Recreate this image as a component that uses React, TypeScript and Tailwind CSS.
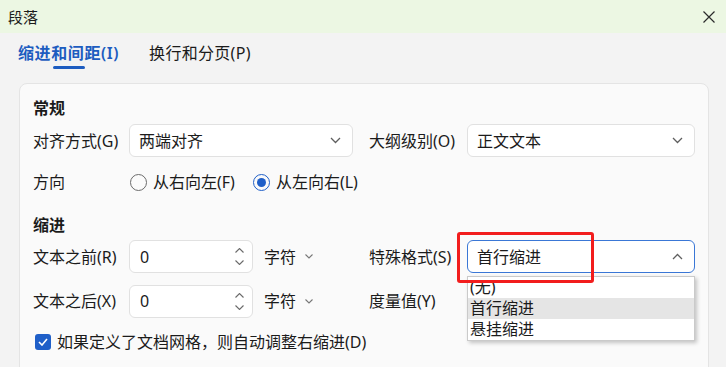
import React from "react";

const Chevron = ({ up = false, className = "" }: { up?: boolean; className?: string }) => (
  <svg width="11" height="7" viewBox="0 0 11 7" className={className}>
    <polyline
      points={up ? "1,6 5.5,1.5 10,6" : "1,1 5.5,5.5 10,1"}
      fill="none"
      stroke="#5f5f5f"
      strokeWidth="1.3"
    />
  </svg>
);

const SmallChevron = () => (
  <svg width="8" height="5" viewBox="0 0 8 5">
    <polyline points="0.5,0.5 4,4 7.5,0.5" fill="none" stroke="#777" strokeWidth="1.1" />
  </svg>
);

const Spin = () => (
  <div className="flex flex-col items-center gap-[7px]">
    <svg width="9" height="5" viewBox="0 0 9 5">
      <polyline points="0.5,4.5 4.5,0.5 8.5,4.5" fill="none" stroke="#6a6a6a" strokeWidth="1.1" />
    </svg>
    <svg width="9" height="5" viewBox="0 0 9 5">
      <polyline points="0.5,0.5 4.5,4.5 8.5,0.5" fill="none" stroke="#6a6a6a" strokeWidth="1.1" />
    </svg>
  </div>
);

function Select({ value, width, open = false }: { value: string; width: string; open?: boolean }) {
  return (
    <div
      className={`${width} h-[33px] flex items-center justify-between pl-[9px] pr-[11px] bg-white rounded-[6px] border ${
        open ? "border-[#3a77d6]" : "border-[#e1e1e1]"
      }`}
    >
      <span>{value}</span>
      <Chevron up={open} />
    </div>
  );
}

function NumberBox({ value }: { value: string }) {
  return (
    <div className="flex items-center">
      <div className="w-[124px] h-[33px] flex items-center justify-between pl-[10px] pr-[8px] bg-white rounded-[6px] border border-[#e1e1e1]">
        <span>{value}</span>
        <Spin />
      </div>
      <span className="ml-[11px]">字符</span>
      <span className="ml-[9px] flex items-center">
        <SmallChevron />
      </span>
    </div>
  );
}

export default function App() {
  return (
    <div className="w-[726px] h-[367px] overflow-hidden bg-[#f3f3f3] text-[#1b1b1b] text-[16px] leading-[20px] font-['Noto_Sans','Noto_Sans_CJK_SC',sans-serif]">
      {/* title bar */}
      <div className="h-[33px] flex items-center justify-between pl-[8px] pr-[11px] bg-[#ecf7e3]">
        <span className="text-[15px]">段落</span>
        <svg width="12" height="12" viewBox="0 0 12 12">
          <path d="M0.5 0.5 L11.5 11.5 M11.5 0.5 L0.5 11.5" stroke="#2b2b2b" strokeWidth="1.2" />
        </svg>
      </div>

      {/* tabs */}
      <div className="flex gap-[30px] pl-[18px] pt-[10px]">
        <div className="flex flex-col items-center">
          <span className="font-semibold text-[#1d5cc0] tracking-[0.6px]">缩进和间距(I)</span>
          <div className="mt-[3px] h-[3px] w-[32px] rounded-full bg-[#1d5cc0]" />
        </div>
        <span className="tracking-[0.3px]">换行和分页(P)</span>
      </div>

      {/* card */}
      <div className="ml-[19px] mt-[14px] w-[690px] h-[300px] rounded-[8px] border border-[#e4e4e4] bg-[#fafafa] px-[13px] pt-[14px]">
        <div className="font-bold">常规</div>

        <div className="mt-[6px] flex items-center h-[33px]">
          <div className="w-[320px] flex items-center">
            <span className="w-[96px]">对齐方式(G)</span>
            <Select value="两端对齐" width="w-[224px]" />
          </div>
          <div className="ml-[16px] flex items-center">
            <span className="w-[98px]">大纲级别(O)</span>
            <Select value="正文文本" width="w-[228px]" />
          </div>
        </div>

        <div className="mt-[13px] flex items-center h-[24px]">
          <span className="w-[96px]">方向</span>
          <div className="flex items-center">
            <span className="ml-[1px] w-[17px] h-[17px] rounded-full border border-[#6b6b6b] bg-[#fbfbfb]" />
            <span className="ml-[6px]">从右向左(F)</span>
            <span className="ml-[18px] w-[17px] h-[17px] rounded-full border border-[#1f5fc8] flex items-center justify-center">
              <span className="w-[9px] h-[9px] rounded-full bg-[#1f5fc8]" />
            </span>
            <span className="ml-[6px]">从左向右(L)</span>
          </div>
        </div>

        <div className="mt-[21px] font-bold">缩进</div>

        <div className="mt-[5px] flex items-center h-[33px]">
          <div className="w-[320px] flex items-center">
            <span className="w-[96px]">文本之前(R)</span>
            <NumberBox value="0" />
          </div>
          <div className="ml-[16px] flex items-center">
            <span className="w-[98px]">特殊格式(S)</span>
            <div className="relative">
              <Select value="首行缩进" width="w-[228px]" open />
              <div className="absolute left-0 top-[36px] z-10 w-[228px] bg-white border border-[#cacaca] shadow-[2px_2px_4px_rgba(0,0,0,0.22)]">
                <div className="h-[21px] pl-[2px] leading-[21px]">(无)</div>
                <div className="h-[21px] pl-[2px] leading-[21px] bg-[#e5e5e5]">首行缩进</div>
                <div className="h-[21px] pl-[2px] leading-[21px]">悬挂缩进</div>
              </div>
              <div className="absolute left-[-10px] top-[-8px] z-20 w-[137px] h-[51px] border-[3px] border-[#f21d1d] rounded-[3px]" />
            </div>
          </div>
        </div>

        <div className="mt-[11px] flex items-center h-[34px]">
          <div className="w-[320px] flex items-center">
            <span className="w-[96px]">文本之后(X)</span>
            <NumberBox value="0" />
          </div>
          <div className="ml-[16px] flex items-center">
            <span className="w-[98px]">度量值(Y)</span>
          </div>
        </div>

        <div className="mt-[14px] flex items-center h-[20px]">
          <span className="ml-[2px] w-[16px] h-[16px] rounded-[3px] bg-[#1f5fc8] flex items-center justify-center">
            <svg width="10" height="8" viewBox="0 0 10 8">
              <polyline points="1,4 4,7 9,1" fill="none" stroke="#fff" strokeWidth="1.6" />
            </svg>
          </span>
          <span className="ml-[6px]">如果定义了文档网格，则自动调整右缩进(D)</span>
        </div>
      </div>
    </div>
  );
}
